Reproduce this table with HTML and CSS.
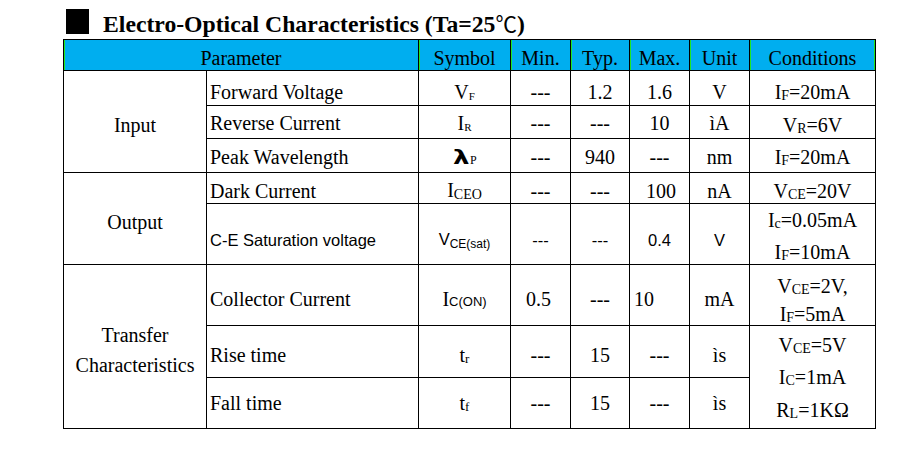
FILE: index.html
```html
<!DOCTYPE html>
<html lang="en">
<head>
<meta charset="utf-8">
<title>Electro-Optical Characteristics</title>
<link rel="stylesheet" href="styles.css">
</head>
<body>
<div class="title">
  <span class="mark"></span>
  <h1 class="title-text">Electro-Optical Characteristics (Ta=25<span class="deg">℃</span>)</h1>
</div>
<div class="spec">
  <div class="c head span2"><span>Parameter</span></div>
  <div class="c head"><span>Symbol</span></div>
  <div class="c head"><span>Min.</span></div>
  <div class="c head"><span>Typ.</span></div>
  <div class="c head"><span>Max.</span></div>
  <div class="c head"><span>Unit</span></div>
  <div class="c head last"><span>Conditions</span></div>

  <div class="c group span3"><span>Input</span></div>
  <div class="c name r1"><span>Forward Voltage</span></div>
  <div class="c r1"><span>V<span class="s-sm">F</span></span></div>
  <div class="c r1"><span>---</span></div>
  <div class="c r1"><span>1.2</span></div>
  <div class="c r1"><span>1.6</span></div>
  <div class="c r1"><span>V</span></div>
  <div class="c r1"><span>I<span class="s-md">F</span>=20mA</span></div>

  <div class="c name r2"><span>Reverse Current</span></div>
  <div class="c r2"><span>I<span class="s-sm">R</span></span></div>
  <div class="c r2"><span>---</span></div>
  <div class="c r2"><span>---</span></div>
  <div class="c r2"><span>10</span></div>
  <div class="c r2"><span>ìA</span></div>
  <div class="c r2 low"><span>V<span class="s-md">R</span>=6V</span></div>

  <div class="c name r3"><span>Peak Wavelength</span></div>
  <div class="c r3"><span><span class="lambda">λ</span><span class="s-p">P</span></span></div>
  <div class="c r3"><span>---</span></div>
  <div class="c r3"><span>940</span></div>
  <div class="c r3"><span>---</span></div>
  <div class="c r3"><span>nm</span></div>
  <div class="c r3"><span>I<span class="s-md">F</span>=20mA</span></div>

  <div class="c group span2r"><span>Output</span></div>
  <div class="c name r4"><span>Dark Current</span></div>
  <div class="c r4"><span>I<span class="s-md s-low">CEO</span></span></div>
  <div class="c r4"><span>---</span></div>
  <div class="c r4"><span>---</span></div>
  <div class="c r4 nudge"><span>100</span></div>
  <div class="c r4"><span>nA</span></div>
  <div class="c r4"><span>V<span class="s-md">CE</span>=20V</span></div>

  <div class="c name sans r5"><span>C-E Saturation voltage</span></div>
  <div class="c sans r5"><span>V<span class="s-sans">CE(sat)</span></span></div>
  <div class="c sans r5"><span>---</span></div>
  <div class="c sans r5"><span>---</span></div>
  <div class="c sans r5"><span>0.4</span></div>
  <div class="c sans r5"><span>V</span></div>
  <div class="c lines-r5"><span>I<span class="s-md">c</span>=0.05mA<br>I<span class="s-md">F</span>=10mA</span></div>

  <div class="c group transfer span3"><span>Transfer<br>Characteristics</span></div>
  <div class="c name r6"><span>Collector Current</span></div>
  <div class="c r6"><span>I<span class="s-arial">C(ON)</span></span></div>
  <div class="c r6 min-shift"><span>0.5</span></div>
  <div class="c r6"><span>---</span></div>
  <div class="c r6 start"><span>10</span></div>
  <div class="c r6"><span>mA</span></div>
  <div class="c lines-r6"><span>V<span class="s-md">CE</span>=2V,<br>I<span class="s-md">F</span>=5mA</span></div>

  <div class="c name r7"><span>Rise time</span></div>
  <div class="c r7"><span>t<span class="s-t">r</span></span></div>
  <div class="c r7"><span>---</span></div>
  <div class="c r7"><span>15</span></div>
  <div class="c r7"><span>---</span></div>
  <div class="c r7"><span>ìs</span></div>
  <div class="c lines-rf span2r"><span>V<span class="s-md">CE</span>=5V<br>I<span class="s-md">C</span>=1mA<br>R<span class="s-md">L</span>=1KΩ</span></div>

  <div class="c name r8"><span>Fall time</span></div>
  <div class="c r8"><span>t<span class="s-t">f</span></span></div>
  <div class="c r8"><span>---</span></div>
  <div class="c r8"><span>15</span></div>
  <div class="c r8"><span>---</span></div>
  <div class="c r8"><span>ìs</span></div>
</div>
</body>
</html>
```
FILE: styles.css
```css
* {
  box-sizing: border-box;
}

body {
  margin: 0;
  background: #fff;
  color: #000;
  font-family: "Liberation Serif", "Times New Roman", serif;
}

.title {
  display: flex;
  align-items: flex-start;
  height: 39px;
  padding-left: 66px;
}

.mark {
  flex: none;
  width: 23px;
  height: 25px;
  margin-top: 9px;
  background: #000;
}

.title-text {
  margin: 10px 0 0 14px;
  font-size: 23.7px;
  font-weight: bold;
  line-height: 26px;
  white-space: nowrap;
}

.deg {
  font-family: "Noto Sans CJK SC", "DejaVu Sans", sans-serif;
  font-weight: normal;
  font-size: 21.5px;
}

.spec {
  display: grid;
  width: 813px;
  margin-left: 63px;
  padding: 1px;
  gap: 1px;
  background: #000;
  grid-template-columns: 142px 211px 91px 59px 58px 59px 59px 125px;
  grid-template-rows: 30px 34px 32px 33px 30px 60px 60px 51px 50px;
}

.c {
  display: flex;
  align-items: center;
  justify-content: center;
  background: #fff;
  font-size: 20px;
  text-align: center;
  white-space: nowrap;
}

.head {
  background: #00aeef;
  padding-top: 6px;
  box-shadow: inset 1px 0 0 #22e622;
}

.head.last {
  box-shadow: inset 1px 0 0 #22e622, inset -1px 0 0 #22e622;
}

.span2 {
  grid-column: span 2;
}

.span3 {
  grid-row: span 3;
}

.span2r {
  grid-row: span 2;
}

.name {
  justify-content: flex-start;
  padding-left: 3px;
}

.start {
  justify-content: flex-start;
  padding-left: 4px;
}

.group {
  padding-top: 8px;
}

.transfer {
  line-height: 30px;
  padding-top: 6px;
}

.sans {
  font-family: "Liberation Sans", Arial, sans-serif;
  font-size: 16.5px;
}

.r1 { padding-top: 9px; }
.r2 { padding-top: 3px; }
.r2.low { padding-top: 7px; }
.r3 { padding-top: 4px; }
.r4 { padding-top: 6px; }
.r5 { padding-top: 12px; }
.r6 { padding-top: 8px; }
.r7 { padding-top: 7px; }
.r8 { padding-top: 0; }

.nudge {
  padding-left: 3px;
}

.min-shift {
  padding-right: 4px;
}

.lines-r5 {
  line-height: 29px;
  padding-top: 8px;
}

.lines-r6 {
  line-height: 24px;
  padding-top: 14px;
}

.lines-rf {
  line-height: 29.5px;
  padding-top: 5px;
}

.s-sm {
  font-size: 11px;
  vertical-align: -1px;
}

.s-md {
  font-size: 14px;
  vertical-align: -1px;
}

.s-low {
  vertical-align: -2px;
}

.s-t {
  font-size: 13px;
  vertical-align: -1px;
}

.s-arial {
  font-family: "Liberation Sans", Arial, sans-serif;
  font-size: 13px;
}

.s-sans {
  font-size: 12px;
  vertical-align: -3px;
}

.lambda {
  display: inline-block;
  font-family: "DejaVu Sans", sans-serif;
  font-weight: bold;
  font-size: 20px;
  line-height: 1;
  transform: scaleX(1.3);
  margin: 0 2px 0 3px;
}

.s-p {
  font-size: 12px;
}
```
